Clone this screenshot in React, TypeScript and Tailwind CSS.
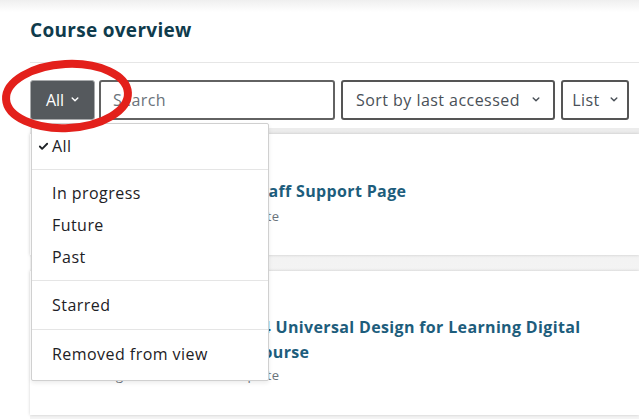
import { Check } from 'lucide-react';

const Chevron = ({ className = '' }: { className?: string }) => (
  <svg viewBox="0 0 10 6" className={`w-[8px] h-[5px] ${className}`} fill="none">
    <path d="M1.5 1.2 5 4.6 8.5 1.2" stroke="currentColor" strokeWidth="1.8" strokeLinecap="round" strokeLinejoin="round" />
  </svg>
);

// each group of the filter menu, with the gap its divider takes
const menu: { items: string[]; gap: string }[] = [
  { items: ['All'], gap: '' },
  { items: ['In progress', 'Future', 'Past'], gap: 'my-[7px]' },
  { items: ['Starred'], gap: 'mt-[7px] mb-[8px]' },
  { items: ['Removed from view'], gap: 'my-[8px]' },
];

export default function App() {
  return (
    <div className="relative w-[639px] h-[419px] overflow-hidden bg-white font-['Open_Sans',sans-serif] text-[#1d2125]">
      <div className="h-3 bg-gradient-to-b from-[#efefef] to-white" />

      <div className="pl-[30px]">
        <h2 className="pt-[4px] h-[50px] text-[19px] font-bold text-[#0f3b4c] tracking-[0.3px]">Course overview</h2>
        <div className="h-px bg-[#e6e6e6]" />

        {/* controls */}
        <div className="flex items-center pt-4 h-[57px]">
          <button className="flex items-center justify-center gap-[7px] w-[65px] h-[40px] rounded-[3px] bg-[#55595d] border border-[#a9abad] text-white text-[16px]">
            All <Chevron />
          </button>
          <div className="ml-1 w-[236px] h-[40px] rounded-[3px] border-2 border-[#626262] flex items-center pl-3 text-[16px] text-[#6a737b] tracking-[0.4px]">
            Search
          </div>
          <button className="ml-[6px] w-[214px] h-[40px] rounded-[3px] border-2 border-[#555] flex items-center justify-center gap-[12px] text-[16px] text-[#495057] tracking-[0.45px]">
            Sort by last accessed <Chevron className="text-[#495057]" />
          </button>
          <button className="ml-[6px] w-[68px] h-[40px] rounded-[3px] border-2 border-[#555] flex items-center justify-center gap-[10px] text-[16px] text-[#495057] tracking-[0.4px]">
            List <Chevron className="text-[#495057]" />
          </button>
        </div>

        {/* course cards */}
        <div className="mt-[8px] pt-[6px] pb-4 flex flex-col gap-4 bg-gradient-to-b from-[#ececec] via-[#f4f4f4] to-[#f4f4f4]">
          <div className="h-[121px] bg-white shadow-[0_0_3px_rgba(0,0,0,0.18)] flex">
            <div className="w-[222px] shrink-0" />
            <div className="pt-[45px]">
              <div className="text-[16px] leading-[24px] font-bold text-[#1d5d7c] tracking-[0.35px]">Staff Support Page</div>
              <div className="mt-[4px] text-[13px] leading-[18px] text-[#6a737b] -ml-[54px] tracking-[0.3px]">0% complete</div>
            </div>
          </div>
          <div className="h-[144px] bg-white shadow-[0_0_3px_rgba(0,0,0,0.18)] flex">
            <div className="w-[222px] shrink-0" />
            <div className="pt-[44px]">
              <div className="text-[16px] leading-[25px] font-bold text-[#1d5d7c] tracking-[0.35px]">
                24 Universal Design for Learning Digital
                <br />
                Course
              </div>
              <div className="mt-[1px] text-[13px] leading-[18px] text-[#6a737b] -ml-[54px] tracking-[0.3px]">
                <span className="inline-block w-[55px] -ml-[130px] mr-[75px]">Learning</span>0% complete
              </div>
            </div>
          </div>
        </div>
      </div>

      {/* open filter dropdown */}
      <div className="absolute left-[31px] top-[123px] w-[238px] pt-[6px] pb-[10px] bg-white border border-[#d0d0d0] rounded-[2px] shadow-[0_2px_4px_rgba(0,0,0,0.08)] text-[16px] tracking-[0.45px]">
        {menu.map((group, gi) => (
          <div key={gi}>
            {gi > 0 && <div className={`${group.gap} h-px bg-[#e5e5e5]`} />}
            {group.items.map(item => (
              <div key={item} className="relative h-8 flex items-center pl-[20px]">
                {gi === 0 && (
                  <Check size={11} strokeWidth={4} className="absolute left-[6px] top-[11px]" />
                )}
                {item}
              </div>
            ))}
          </div>
        ))}
      </div>

      {/* red annotation ring */}
      <svg className="absolute left-0 top-[55px] w-[140px] h-[85px] pointer-events-none" viewBox="0 0 140 85">
        <ellipse cx="67" cy="41" rx="61" ry="32" fill="none" stroke="#e3201b" strokeWidth="8" transform="rotate(-3 67 41)" />
      </svg>
    </div>
  );
}
